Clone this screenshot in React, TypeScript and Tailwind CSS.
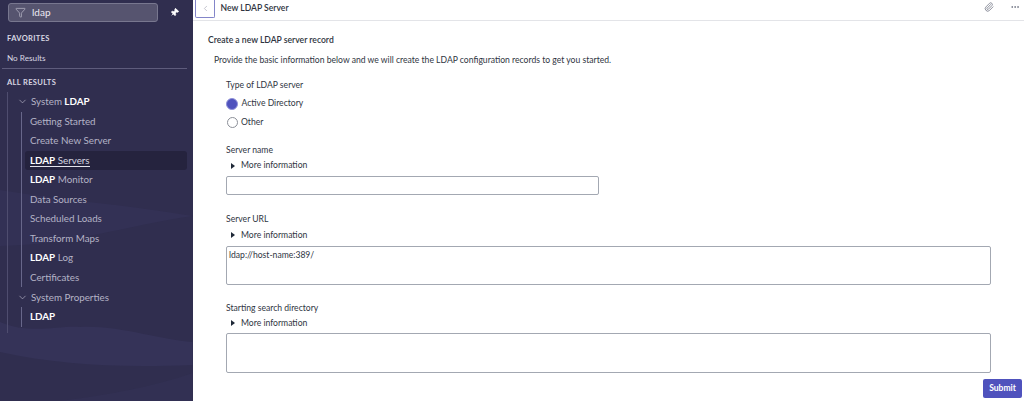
import { ChevronDown, ChevronLeft, Ellipsis, Filter, Paperclip, Pin } from "lucide-react";

function Highlight({ text }: { text: string }) {
  // bold the LDAP part of a search match
  const rest = text.replace("LDAP", "");
  return (
    <>
      <span className="font-bold text-white">LDAP</span>
      {rest && <span>{rest}</span>}
    </>
  );
}

function ModuleRow({ label, match, active }: { label: string; match?: boolean; active?: boolean }) {
  return (
    <div
      className={
        "h-[19.5px] flex items-center pl-[5px] rounded-[3px] " +
        (active ? "bg-[#25233e] text-[#d5d4e0]" : "text-[#b4b3c6]")
      }
    >
      <span className={active ? "border-b border-[#e4e3ec] leading-[11px] mt-[1px]" : ""}>
        {match ? <Highlight text={label} /> : label}
      </span>
    </div>
  );
}

function Group({ title, match, children }: { title: string; match?: boolean; children: React.ReactNode }) {
  return (
    <div>
      <div className="h-[20px] flex items-center text-[#b4b3c6]">
        <ChevronDown className="w-[11px] h-[11px] ml-[9px] mr-[3px] text-[#b4b3c6]" strokeWidth={1.5} />
        <span>
          {title}
          {match && <span className="font-bold text-white"> LDAP</span>}
        </span>
      </div>
      <div className="ml-[12.5px] border-l-[1.5px] border-[#68678a] pl-[3.5px] mr-[6px]">{children}</div>
    </div>
  );
}

function RadioRow({ label, checked }: { label: string; checked?: boolean }) {
  return (
    <div className="h-[19px] flex items-center gap-[3.5px]">
      {checked ? (
        <span className="w-[12px] h-[12px] rounded-full bg-[#4f52bd] border-[1.5px] border-[#8f91d8]" />
      ) : (
        <span className="w-[11px] h-[11px] ml-[0.5px] rounded-full bg-white border border-[#8b8f98]" />
      )}
      <span>{label}</span>
    </div>
  );
}

function MoreInfo() {
  return (
    <div className="flex items-center h-[15px] pl-[5px] gap-[6px]">
      <span className="w-0 h-0 border-y-[3.5px] border-y-transparent border-l-[4px] border-l-[#1f2937]" />
      <span>More information</span>
    </div>
  );
}

export default function App() {
  return (
    <div className="w-[1024px] h-[401px] overflow-hidden flex bg-white font-['Lato','Noto_Sans',sans-serif] text-[10px]">
      {/* navigator */}
      <aside className="relative w-[192.5px] shrink-0 bg-[#302e4f] overflow-hidden">
        <svg className="absolute inset-0 w-full h-full" viewBox="0 0 193 401" preserveAspectRatio="none">
          <path d="M0 190 C60 200 130 205 193 216 C130 225 70 245 0 246 Z" fill="#333155" />
          <path d="M0 322 C30 335 60 325 80 327 C120 325 160 340 193 342 V365 C120 368 60 365 0 352 Z" fill="#353358" />
          <path d="M60 401 C110 395 160 385 193 373 V401 Z" fill="#323053" />
        </svg>
        <div className="relative flex flex-col">
          <div className="flex items-center pl-[8px] pt-[3px]">
            <div className="w-[150px] h-[19px] rounded-[3px] bg-[#56546f] border border-[#78778f] flex items-center text-[#eceaf3] text-[10px]">
              <Filter className="w-[11px] h-[11px] ml-[6px] mr-[6px] text-[#cfcedb]" strokeWidth={1.3} />
              <span>ldap</span>
            </div>
            <Pin className="w-[9px] h-[9px] ml-[12px] text-white fill-white rotate-45" strokeWidth={2} />
          </div>
          <div className="pl-[7px] mt-[11px] h-[12px] flex items-center font-bold text-[7.5px] tracking-[0.35px] text-[#d8d7e3]">FAVORITES</div>
          <div className="pl-[7px] mt-[7px] h-[12px] flex items-center text-[8.2px] text-[#d8d7e3]">No Results</div>
          <div className="ml-[2px] w-[185px] mt-[4px] h-px bg-[#5e5c7c]" />
          <div className="pl-[7px] mt-[8px] h-[12px] flex items-center font-bold text-[7.5px] tracking-[0.35px] text-[#d8d7e3]">ALL RESULTS</div>
          <div className="ml-[7px] mt-[2.5px] border-l-[1.5px] border-[#4f4d6f] text-[9.8px]">
            <Group title="System" match>
              <ModuleRow label="Getting Started" />
              <ModuleRow label="Create New Server" />
              <ModuleRow label="LDAP Servers" match active />
              <ModuleRow label="LDAP Monitor" match />
              <ModuleRow label="Data Sources" />
              <ModuleRow label="Scheduled Loads" />
              <ModuleRow label="Transform Maps" />
              <ModuleRow label="LDAP Log" match />
              <ModuleRow label="Certificates" />
            </Group>
            <Group title="System Properties">
              <ModuleRow label="LDAP" match />
            </Group>
            <div className="h-[6px]" />
          </div>
        </div>
      </aside>

      {/* form */}
      <main className="flex-1 min-w-0 flex flex-col text-[#2f3542] text-[8.6px]">
        <header className="h-[21px] shrink-0 flex items-start border-b-[1.5px] border-[#e3e4e8]">
          <button className="w-[20px] h-[18px] ml-[2.5px] border border-[#8385c9] rounded-b-[2px] border-t-0 flex items-center justify-center">
            <ChevronLeft className="w-[9px] h-[9px] text-[#9a9cab]" strokeWidth={1.5} />
          </button>
          <h1 className="ml-[5.5px] mt-[2px] font-semibold text-[8.6px] text-[#2e3440]">New LDAP Server</h1>
          <div className="ml-auto flex items-center gap-[16px] mr-[4px] mt-[2px] text-[#6b7080]">
            <Paperclip className="w-[10px] h-[10px]" strokeWidth={1.8} />
            <Ellipsis className="w-[10px] h-[10px]" strokeWidth={2} />
          </div>
        </header>
        <div className="flex-1 pl-[15.5px] pr-[2px]">
          <div className="mt-[13px] h-[12px] flex items-center font-semibold text-[#2e3440]">Create a new LDAP server record</div>
          <div className="mt-[8px] pl-[6px] h-[12px] flex items-center">
            Provide the basic information below and we will create the LDAP configuration records to get you started.
          </div>
          <div className="pl-[18px]">
            <div className="mt-[13px] h-[12px] flex items-center">Type of LDAP server</div>
            <div className="mt-[3px]">
              <RadioRow label="Active Directory" checked />
              <RadioRow label="Other" />
            </div>
            <div className="mt-[12px] h-[12px] flex items-center">Server name</div>
            <div className="mt-[2px]"><MoreInfo /></div>
            <div className="mt-[2.5px] w-[372.5px] h-[19px] border border-[#a3a8b2] rounded-[2px] bg-white" />
            <div className="mt-[19px] h-[12px] flex items-center">Server URL</div>
            <div className="mt-[2px]"><MoreInfo /></div>
            <div className="mt-[3px] w-[765px] h-[39px] border border-[#a3a8b2] rounded-[2px] bg-white px-[2px] pt-[1px] leading-[14px]">ldap://host-name:389/</div>
            <div className="mt-[18px] h-[12px] flex items-center">Starting search directory</div>
            <div className="mt-[1px]"><MoreInfo /></div>
            <div className="mt-[2px] w-[765px] h-[40px] border border-[#a3a8b2] rounded-[2px] bg-white" />
          </div>
          <div className="flex justify-end mt-[6px]">
            <button className="w-[39px] h-[19px] rounded-[2px] bg-[#4f52bd] text-white font-bold text-[8.5px] flex items-center justify-center">Submit</button>
          </div>
        </div>
      </main>
    </div>
  );
}
